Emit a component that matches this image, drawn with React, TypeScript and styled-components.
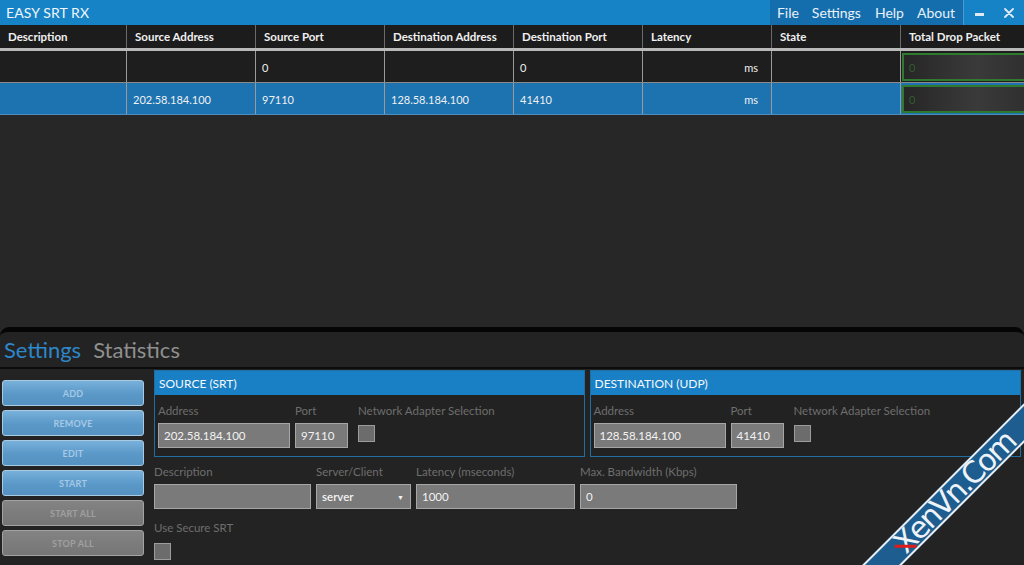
import React from "react";
import styled, { createGlobalStyle } from "styled-components";

const Global = createGlobalStyle`
  html, body { margin: 0; padding: 0; background: #262626; }
  body { font-family: "Lato", "Open Sans", sans-serif; }
  * { box-sizing: border-box; }
`;

const Window = styled.div`
  position: relative;
  width: 1024px;
  height: 565px;
  overflow: hidden;
  background: #272727;
  display: flex;
  flex-direction: column;
  font-family: "Lato", "Open Sans", sans-serif;
`;

const TitleBar = styled.div`
  height: 25px;
  background: #1783c7;
  display: flex;
  align-items: center;
  color: #f2f6fa;
`;

const Title = styled.div`
  font-size: 14px;
  padding-left: 6px;
  flex: 1;
  letter-spacing: 0.1px;
`;

const Menu = styled.div`
  height: 25px;
  display: flex;
  align-items: center;
  padding: 0 0 0 7px;
  background: #146ead;
  border-right: 1px solid #4a9ad0;
`;

const MenuItem = styled.span<{ $gap: number }>`
  font-size: 14px;
  color: #e8f1f8;
  margin-right: ${(p) => p.$gap}px;
`;

const WinButton = styled.span`
  width: 30px;
  height: 25px;
  display: flex;
  justify-content: center;
  align-items: center;
`;

const MinBar = styled.span`
  width: 9px;
  height: 3px;
  margin-top: 4px;
  background: #dfeaf4;
`;

const Grid = styled.div`
  display: grid;
  grid-template-columns: 126px 129px 129px 129px 129px 129px 129px 124px;
`;

const HeadRow = styled(Grid)`
  height: 26px;
  background: #1c1c1c;
  border-bottom: 3px solid #b9b9b9;
`;

const HeadCell = styled.div`
  display: flex;
  align-items: center;
  padding-left: 8px;
  font-size: 11.5px;
  font-weight: 700;
  color: #f0f0f0;
  border-left: 1px solid #6a6a6a;
  &:first-child { border-left: none; }
`;

const BodyRow = styled(Grid)<{ $sel?: boolean }>`
  height: 32px;
  background: ${(p) => (p.$sel ? "#1c73b0" : "#1e1e1e")};
  border-bottom: 1px solid ${(p) => (p.$sel ? "#4f8fbd" : "#8a8a8a")};
`;

const Cell = styled.div<{ $right?: boolean }>`
  display: flex;
  align-items: center;
  justify-content: ${(p) => (p.$right ? "flex-end" : "flex-start")};
  padding: ${(p) => (p.$right ? "2px 13px 0 0" : "2px 0 0 6px")};
  font-size: 11px;
  color: #f0f0f0;
  border-left: 1px solid #9a9a9a;
  &:first-child { border-left: none; }
`;

const DropCell = styled.div`
  border-left: 1px solid #9a9a9a;
  padding: 2px 0 1px 1px;
  display: flex;
`;

const DropBox = styled.div`
  flex: 1;
  border: 2px solid #2d7a30;
  border-right: none;
  background: linear-gradient(90deg, #262626, #3a3a3a 60%, #303030);
  display: flex;
  align-items: center;
  padding-left: 5px;
  font-size: 11px;
  color: #2f5e2f;
`;

const Spacer = styled.div`
  flex: 1;
`;

const BottomPanel = styled.div`
  height: 238px;
  background: #232323;
  border-top: 5px solid #050505;
  border-radius: 9px 9px 0 0;
  display: flex;
  flex-direction: column;
`;

const Tabs = styled.div`
  height: 37px;
  display: flex;
  align-items: center;
  padding-left: 4px;
  gap: 12px;
  border-bottom: 2px solid #0c0c0c;
`;

const Tab = styled.span<{ $active?: boolean }>`
  font-size: 22px;
  color: ${(p) => (p.$active ? "#2e87c9" : "#8f8f8f")};
  line-height: 1;
`;

const Content = styled.div`
  display: flex;
  padding: 1px 0 0 2px;
  gap: 10px;
`;

const ButtonCol = styled.div`
  width: 142px;
  margin-top: 10px;
  display: flex;
  flex-direction: column;
  gap: 4px;
`;

const ActionButton = styled.div<{ $blue?: boolean }>`
  height: 26px;
  border-radius: 3px;
  border: 1px solid ${(p) => (p.$blue ? "#a8cbe4" : "#a3a3a3")};
  background: ${(p) =>
    p.$blue
      ? "linear-gradient(180deg, #78b0da 0%, #5a98c8 55%, #5592c2 100%)"
      : "linear-gradient(180deg, #838383 0%, #767676 100%)"};
  color: ${(p) => (p.$blue ? "#a5c9e6" : "#a0a0a0")};
  font-size: 9px;
  font-weight: 700;
  display: flex;
  align-items: center;
  justify-content: center;
  letter-spacing: 0.2px;
`;

const Form = styled.div`
  display: flex;
  flex-direction: column;
  width: 867px;
`;

const PanelRow = styled.div`
  display: flex;
  gap: 5px;
`;

const Panel = styled.div<{ $w: number }>`
  width: ${(p) => p.$w}px;
  height: 87px;
  border: 1px solid #1f6ea4;
  background: #222;
`;

const PanelHead = styled.div`
  height: 24px;
  background: #1a80c5;
  color: #f4f8fb;
  font-size: 12px;
  display: flex;
  align-items: center;
  padding-left: 4px;
`;

const PanelBody = styled.div`
  display: flex;
  gap: 5px;
  padding: 9px 0 0 3px;
`;

const Field = styled.div<{ $w: number; $ml?: number }>`
  width: ${(p) => p.$w}px;
  margin-left: ${(p) => p.$ml || 0}px;
  display: flex;
  flex-direction: column;
  gap: 5px;
`;

const Label = styled.div`
  font-size: 11.5px;
  color: #6e6e6e;
  white-space: nowrap;
  height: 14px;
  line-height: 14px;
`;

const Input = styled.div`
  height: 25px;
  background: #7a7a7a;
  border: 1px solid #a6a6a6;
  color: #f2f2f2;
  font-size: 11.5px;
  display: flex;
  align-items: center;
  padding-left: 5px;
`;

const Select = styled(Input)`
  justify-content: space-between;
  padding-right: 6px;
  font-weight: 600;
`;

const Arrow = styled.span`
  font-size: 7px;
`;

const Check = styled.div<{ $mt?: number }>`
  width: 17px;
  height: 17px;
  margin-top: ${(p) => p.$mt ?? 2}px;
  background: #6c6c6c;
  border: 1px solid #9c9c9c;
`;

const FieldsRow = styled.div`
  display: flex;
  gap: 5px;
  margin-top: 8px;
`;

const SecureBlock = styled.div`
  margin-top: 12px;
  display: flex;
  flex-direction: column;
`;

const Watermark = styled.div`
  position: absolute;
  left: 782px;
  top: 481px;
  width: 340px;
  height: 28px;
  transform: rotate(-45deg);
  background: #1d5d8f;
  border-top: 2px solid #e8eef4;
  border-bottom: 2px solid #e8eef4;
  display: flex;
  align-items: center;
  padding-left: 95px;
  color: #eef3f8;
  font-family: "DejaVu Sans", sans-serif;
  font-size: 30px;
  letter-spacing: -2px;
  line-height: 1;
`;

const XMark = styled.span`
  position: relative;
  display: inline-block;
  &::after {
    content: "";
    position: absolute;
    left: -5px;
    top: 58%;
    width: 22px;
    height: 3px;
    background: #e01b1b;
    transform: rotate(45deg);
  }
`;

const cols = [
  "Description",
  "Source Address",
  "Source Port",
  "Destination Address",
  "Destination Port",
  "Latency",
  "State",
  "Total Drop Packet",
];

const rows = [
  { sel: false, data: ["", "", "0", "", "0"] },
  { sel: true, data: ["", "202.58.184.100", "97110", "128.58.184.100", "41410"] },
];

const buttons = [
  { t: "ADD", b: true },
  { t: "REMOVE", b: true },
  { t: "EDIT", b: true },
  { t: "START", b: true },
  { t: "START ALL", b: false },
  { t: "STOP ALL", b: false },
];

function EndpointPanel({ title, addr, port, w }: { title: string; addr: string; port: string; w: number }) {
  return (
    <Panel $w={w}>
      <PanelHead>{title}</PanelHead>
      <PanelBody>
        <Field $w={132}>
          <Label>Address</Label>
          <Input>{addr}</Input>
        </Field>
        <Field $w={53}>
          <Label>Port</Label>
          <Input>{port}</Input>
        </Field>
        <Field $w={160} $ml={5}>
          <Label>Network Adapter Selection</Label>
          <Check />
        </Field>
      </PanelBody>
    </Panel>
  );
}

export default function App() {
  return (
    <Window>
      <Global />
      <TitleBar>
        <Title>EASY SRT RX</Title>
        <Menu>
          <MenuItem $gap={13}>File</MenuItem>
          <MenuItem $gap={14}>Settings</MenuItem>
          <MenuItem $gap={13}>Help</MenuItem>
          <MenuItem $gap={8}>About</MenuItem>
        </Menu>
        <WinButton>
          <MinBar />
        </WinButton>
        <WinButton>
          <svg width="10" height="10" viewBox="0 0 10 10">
            <path d="M1 1 L9 9 M9 1 L1 9" stroke="#dfeaf4" strokeWidth="1.8" strokeLinecap="round" />
          </svg>
        </WinButton>
      </TitleBar>
      <HeadRow>
        {cols.map((c) => (
          <HeadCell key={c}>{c}</HeadCell>
        ))}
      </HeadRow>
      {rows.map((r, i) => (
        <BodyRow key={i} $sel={r.sel}>
          {r.data.map((d, j) => (
            <Cell key={j}>{d}</Cell>
          ))}
          <Cell $right>ms</Cell>
          <Cell />
          <DropCell>
            <DropBox>0</DropBox>
          </DropCell>
        </BodyRow>
      ))}
      <Spacer />
      <BottomPanel>
        <Tabs>
          <Tab $active>Settings</Tab>
          <Tab>Statistics</Tab>
        </Tabs>
        <Content>
          <ButtonCol>
            {buttons.map((b) => (
              <ActionButton key={b.t} $blue={b.b}>
                {b.t}
              </ActionButton>
            ))}
          </ButtonCol>
          <Form>
            <PanelRow>
              <EndpointPanel title="SOURCE (SRT)" addr="202.58.184.100" port="97110" w={431} />
              <EndpointPanel title="DESTINATION (UDP)" addr="128.58.184.100" port="41410" w={432} />
            </PanelRow>
            <FieldsRow>
              <Field $w={157}>
                <Label>Description</Label>
                <Input />
              </Field>
              <Field $w={95}>
                <Label>Server/Client</Label>
                <Select>
                  <span>server</span>
                  <Arrow>&#9660;</Arrow>
                </Select>
              </Field>
              <Field $w={159}>
                <Label>Latency (mseconds)</Label>
                <Input>1000</Input>
              </Field>
              <Field $w={157}>
                <Label>Max. Bandwidth (Kbps)</Label>
                <Input>0</Input>
              </Field>
            </FieldsRow>
            <SecureBlock>
              <Label>Use Secure SRT</Label>
              <Check $mt={8} />
            </SecureBlock>
          </Form>
        </Content>
      </BottomPanel>
      <Watermark>
        <XMark>X</XMark>enVn.Com
      </Watermark>
    </Window>
  );
}
